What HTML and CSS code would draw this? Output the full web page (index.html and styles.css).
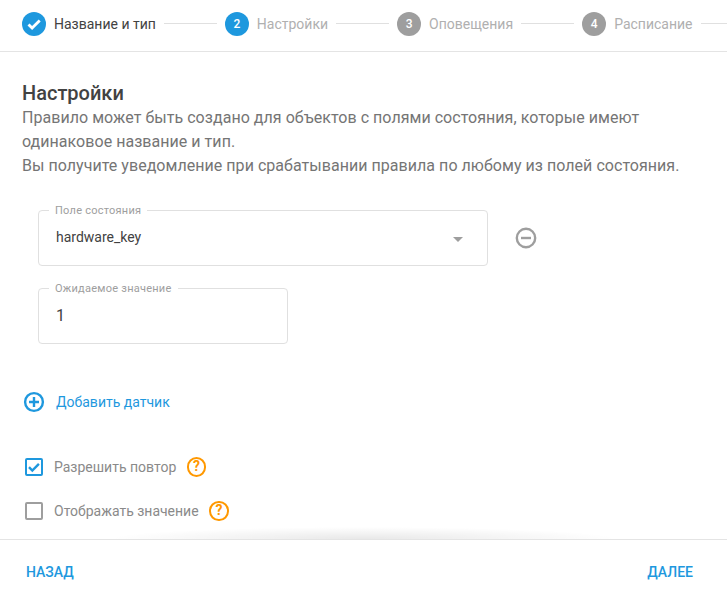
FILE: index.html
```html
<!DOCTYPE html>
<html lang="ru">
<head>
<meta charset="utf-8">
<title>Настройки</title>
<link rel="stylesheet" href="styles.css">
</head>
<body>
<div class="app">
  <header class="stepper">
    <span class="dot dot-on"><svg width="24" height="24" viewBox="0 0 24 24"><path d="M6.5 12.5l3.6 3.6 7.6-7.6" fill="none" stroke="#fff" stroke-width="2.8"/></svg></span>
    <span class="step-label step-done">Название и тип</span>
    <span class="line"></span>
    <span class="dot dot-on">2</span>
    <span class="step-label">Настройки</span>
    <span class="line"></span>
    <span class="dot">3</span>
    <span class="step-label">Оповещения</span>
    <span class="line"></span>
    <span class="dot">4</span>
    <span class="step-label">Расписание</span>
    <span class="line line-last"></span>
  </header>
  <main class="content">
    <h1 class="title">Настройки</h1>
    <p class="desc">Правило может быть создано для объектов с полями состояния, которые имеют одинаковое название и тип.<br>Вы получите уведомление при срабатывании правила по любому из полей состояния.</p>
    <div class="sensor-row">
      <div class="field field-wide">
        <span class="field-label">Поле состояния</span>
        <span class="field-value field-value-small">hardware_key</span>
        <span class="arrow"></span>
      </div>
      <svg class="remove" width="24" height="24" viewBox="0 0 24 24"><circle cx="12" cy="12" r="9.2" fill="none" stroke="#9e9e9e" stroke-width="2.4"/><path d="M7 12h10" stroke="#9e9e9e" stroke-width="2.4"/></svg>
    </div>
    <div class="field field-narrow">
      <span class="field-label">Ожидаемое значение</span>
      <span class="field-value">1</span>
    </div>
    <div class="add">
      <svg width="24" height="24" viewBox="0 0 24 24"><circle cx="12" cy="12" r="8.9" fill="none" stroke="#1e98de" stroke-width="2.4"/><path d="M12 7v10M7 12h10" stroke="#1e98de" stroke-width="2.4"/></svg>
      <span class="add-text">Добавить датчик</span>
    </div>
    <div class="check-row check-first">
      <span class="box box-on"><svg width="18" height="18" viewBox="0 0 18 18"><path d="M4 9.2l3.3 3.3 6.6-6.6" fill="none" stroke="#1e98de" stroke-width="2.4"/></svg></span>
      <span class="check-label">Разрешить повтор</span>
      <span class="help">?</span>
    </div>
    <div class="check-row">
      <span class="box"></span>
      <span class="check-label">Отображать значение</span>
      <span class="help">?</span>
    </div>
  </main>
  <footer class="footer">
    <span class="btn">НАЗАД</span>
    <span class="btn">ДАЛЕЕ</span>
  </footer>
</div>
</body>
</html>
```
FILE: styles.css
```css
* { box-sizing: border-box; }
html, body { margin: 0; padding: 0; background: #fff; }
body { font-family: Roboto, "Liberation Sans", sans-serif; overflow: hidden; }
.app { width: 727px; height: 591px; display: flex; flex-direction: column; overflow: hidden; }

.stepper { height: 52px; flex: none; display: flex; align-items: center; padding: 0 0 4px 22px; border-bottom: 1px solid #e4e4e4; white-space: nowrap; }
.dot { width: 24px; height: 24px; border-radius: 50%; background: #9e9e9e; color: #fff; font-size: 12px; font-weight: 500; display: flex; align-items: center; justify-content: center; flex: none; }
.dot-on { background: #1e98de; }
.step-label { font-size: 14px; color: #b0b0b0; margin-left: 8px; }
.step-done { color: #424242; }
.line { width: 53px; height: 1px; background: #e0e0e0; margin: 0 8px; flex: none; }
.line-last { margin-right: 0; }

.content { flex: 1; min-height: 0; padding: 0 22px; position: relative; overflow: hidden; }
.title { margin: 29px 0 0; font-size: 20px; line-height: 24px; font-weight: 500; color: #424242; }
.desc { margin: 1px 0 0; font-size: 16px; line-height: 24px; color: #757575; letter-spacing: .04px; }

.sensor-row { display: flex; align-items: center; margin: 32px 0 0 16px; }
.field { position: relative; height: 56px; border: 1px solid #e0e0e0; border-radius: 4px; padding: 0 17px; display: flex; align-items: center; }
.field-wide { width: 450px; }
.field-narrow { width: 250px; margin: 22px 0 0 16px; }
.field-label { position: absolute; left: 10px; top: -7px; padding: 0 6px; background: #fff; font-size: 11px; line-height: 13px; color: #9e9e9e; letter-spacing: .25px; }
.field-value { font-size: 16px; line-height: 20px; color: #424242; margin-top: 0; }
.field-value-small { font-size: 14px; margin-top: -2px; }
.arrow { position: absolute; right: 24px; top: 26px; border: 5px solid transparent; border-top-color: #9e9e9e; border-bottom: 0; }
.remove { margin-left: 26px; }

.add { display: flex; align-items: center; gap: 10px; margin: 46px 0 0 0; height: 24px; }
.add-text { font-size: 14px; color: #1e98de; }

.check-row { display: flex; align-items: center; height: 20px; margin-top: 24px; }
.check-first { margin-top: 43px; }
.box { width: 18px; height: 18px; margin-left: 3px; border: 2px solid #9e9e9e; border-radius: 2px; flex: none; position: relative; display: block; }
.box svg { position: absolute; left: -2px; top: -2px; }
.box-on { border-color: #1e98de; }
.check-label { font-size: 14px; color: #8a8a8a; margin-left: 11px; }
.help { width: 19.5px; height: 19.5px; margin-left: 10.5px; border: 2px solid #ff9800; border-radius: 50%; color: #ff9800; font-size: 14px; font-weight: 700; line-height: 15.5px; text-align: center; flex: none; }

.footer { height: 52px; flex: none; position: relative; display: flex; align-items: center; justify-content: space-between; padding: 12px 34px 0 26px; background: #fff; border-top: 1px solid #e4e4e4; }
.footer::before { content: ""; position: absolute; left: 15%; right: 15%; top: -13px; height: 12px; background: radial-gradient(ellipse 50% 100% at 50% 100%, rgba(0,0,0,.09), rgba(0,0,0,0)); }
.btn { font-size: 14px; font-weight: 500; color: #1e98de; }
```
